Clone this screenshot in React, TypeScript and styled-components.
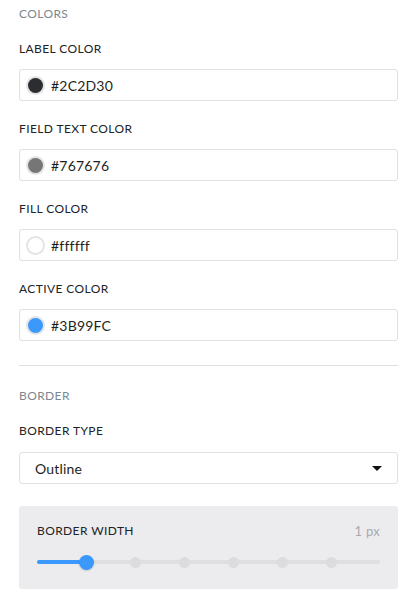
import styled, { createGlobalStyle } from "styled-components";

const GlobalStyle = createGlobalStyle`
  body {
    margin: 0;
    background: #ffffff;
    font-family: "Lato", "Open Sans", sans-serif;
    color: #2c2d30;
  }
`;

const colors = [
  { label: "LABEL COLOR", value: "#2C2D30", swatch: "#2c2d30" },
  { label: "FIELD TEXT COLOR", value: "#767676", swatch: "#767676" },
  { label: "FILL COLOR", value: "#ffffff", swatch: "#ffffff" },
  { label: "ACTIVE COLOR", value: "#3B99FC", swatch: "#3b99fc" },
];

const STEPS = 7;
const VALUE = 1;

export default function App() {
  return (
    <Page>
      <GlobalStyle />
      <SectionTitle>COLORS</SectionTitle>
      <FieldList>
        {colors.map((c) => (
          <Field key={c.label}>
            <Label>{c.label}</Label>
            <InputBox>
              <Swatch $color={c.swatch} />
              <InputText>{c.value}</InputText>
            </InputBox>
          </Field>
        ))}
      </FieldList>

      <Divider />

      <SectionTitle>BORDER</SectionTitle>
      <FieldList>
        <Field $gap={13}>
          <Label>BORDER TYPE</Label>
          <SelectBox>
            <SelectText>Outline</SelectText>
            <Caret />
          </SelectBox>
        </Field>
      </FieldList>

      <Panel>
        <PanelHeader>
          <Label>BORDER WIDTH</Label>
          <Unit>1 px</Unit>
        </PanelHeader>
        <Slider>
          <Track />
          <Fill style={{ width: `${(VALUE / STEPS) * 100}%` }} />
          {Array.from({ length: STEPS - 1 }, (_, i) => i + 1)
            .filter((i) => i > VALUE)
            .map((i) => (
              <Dot key={i} style={{ left: `${(i / STEPS) * 100}%` }} />
            ))}
          <Thumb style={{ left: `${(VALUE / STEPS) * 100}%` }} />
        </Slider>
      </Panel>
    </Page>
  );
}

const Page = styled.div`
  padding: 6px 20px 20px 19px;
  display: flex;
  flex-direction: column;
`;

const SectionTitle = styled.div`
  font-size: 12px;
  line-height: 16px;
  color: #7d8790;
  letter-spacing: 0.4px;
`;

const FieldList = styled.div`
  display: flex;
  flex-direction: column;
  gap: 20px;
  margin-top: 19px;
`;

const Field = styled.div<{ $gap?: number }>`
  display: flex;
  flex-direction: column;
  gap: ${(p) => p.$gap ?? 12}px;
`;

const Label = styled.div`
  font-size: 12px;
  line-height: 16px;
  color: #222326;
  letter-spacing: 0.4px;
`;

const InputBox = styled.div`
  height: 32px;
  box-sizing: border-box;
  border: 1px solid #dfe0e2;
  border-radius: 3px;
  display: flex;
  align-items: center;
  padding-left: 8px;
  gap: 8px;
`;

const Swatch = styled.span<{ $color: string }>`
  width: 15px;
  height: 15px;
  box-sizing: border-box;
  border-radius: 50%;
  background: ${(p) => p.$color};
  box-shadow: 0 0 0 2px #e4e4e6;
`;

const InputText = styled.span`
  font-size: 14px;
  color: #1f1f21;
  letter-spacing: 0.2px;
`;

const Divider = styled.hr`
  border: none;
  border-top: 1px solid #dedfe1;
  margin: 24px 0 22px;
  width: 100%;
`;

const SelectBox = styled.div`
  height: 32px;
  box-sizing: border-box;
  border: 1px solid #dfe0e2;
  border-radius: 3px;
  display: flex;
  align-items: center;
  justify-content: space-between;
  padding: 0 15px 0 15px;
`;

const SelectText = styled.span`
  font-size: 14px;
  color: #1f1f21;
  letter-spacing: 0.2px;
`;

const Caret = styled.span`
  width: 0;
  height: 0;
  border-left: 5px solid transparent;
  border-right: 5px solid transparent;
  border-top: 5px solid #111;
`;

const Panel = styled.div`
  margin-top: 22px;
  background: #ececee;
  border-radius: 3px;
  padding: 17px 18px 19px 18px;
  display: flex;
  flex-direction: column;
  gap: 15px;
`;

const PanelHeader = styled.div`
  display: flex;
  justify-content: space-between;
  align-items: center;
`;

const Unit = styled.span`
  font-size: 13px;
  color: #a9aaad;
  letter-spacing: 0.3px;
`;

const Slider = styled.div`
  position: relative;
  height: 16px;
`;

const Track = styled.div`
  position: absolute;
  left: 0;
  right: 0;
  top: 6px;
  height: 4px;
  border-radius: 2px;
  background: #dfdfe1;
`;

const Fill = styled.div`
  position: absolute;
  left: 0;
  top: 6px;
  height: 4px;
  border-radius: 2px;
  background: #3b99fc;
`;

const Dot = styled.div`
  position: absolute;
  top: 3px;
  width: 11px;
  height: 11px;
  margin-left: -5.5px;
  border-radius: 50%;
  background: #dcdcde;
`;

const Thumb = styled.div`
  position: absolute;
  top: 1px;
  width: 15px;
  height: 15px;
  margin-left: -7.5px;
  border-radius: 50%;
  background: #3b99fc;
  box-shadow: 0 1px 2px rgba(0, 0, 0, 0.15);
`;
